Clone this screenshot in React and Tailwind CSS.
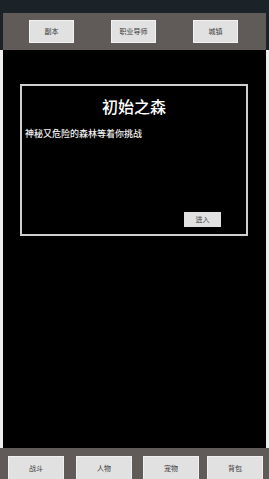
export default function App() {
  const font = { fontFamily: '"Noto Sans CJK SC", "Noto Sans", sans-serif' };
  const topBtn =
    "w-[45px] h-[23px] bg-[#e1e1e1] border border-[#f2f2f2] flex items-center justify-center text-[7px] text-[#3a3a3a] leading-none";
  const botBtn =
    "w-[56px] h-[26px] bg-[#e1e1e1] border border-[#f0f0f0] flex items-center justify-center text-[7px] text-[#3a3a3a] leading-none pb-[2px]";
  return (
    <div className="w-[269px] h-[479px] flex flex-col overflow-hidden" style={font}>
      <div className="bg-[#1b2329] pt-[13px] px-[3px]">
        <div className="h-[37px] bg-[#605a59] flex items-center pl-[26px] gap-[37px]">
          <div className={topBtn}>副本</div>
          <div className={topBtn}>职业导师</div>
          <div className={topBtn}>城镇</div>
        </div>
      </div>
      <div className="flex-1 bg-[#eeeeee] px-[3px]">
        <div className="h-full bg-black pt-[34px] pl-[17px]">
          <div className="w-[228px] h-[152px] border-2 border-[#cfcfcf] flex flex-col">
            <div className="text-center text-white text-[16px] font-medium leading-none mt-[12px]">初始之森</div>
            <div className="text-[#f2f2f2] text-[9px] font-medium leading-none mt-[15px] pl-[3px]">神秘又危险的森林等着你挑战</div>
            <div className="flex-1" />
            <div className="flex justify-end pr-[25px] mb-[7px]">
              <div className="w-[37px] h-[15px] bg-[#e1e1e1] flex items-center justify-center text-[7px] text-[#444] leading-none">进入</div>
            </div>
          </div>
        </div>
      </div>
      <div className="h-[31px] bg-[#605a59] flex items-start pt-[8px] pl-[8px]">
        <div className={botBtn}>战斗</div>
        <div className={botBtn + " ml-[12px]"}>人物</div>
        <div className={botBtn + " ml-[11px]"}>宠物</div>
        <div className={botBtn + " ml-[8px]"}>背包</div>
      </div>
    </div>
  );
}
